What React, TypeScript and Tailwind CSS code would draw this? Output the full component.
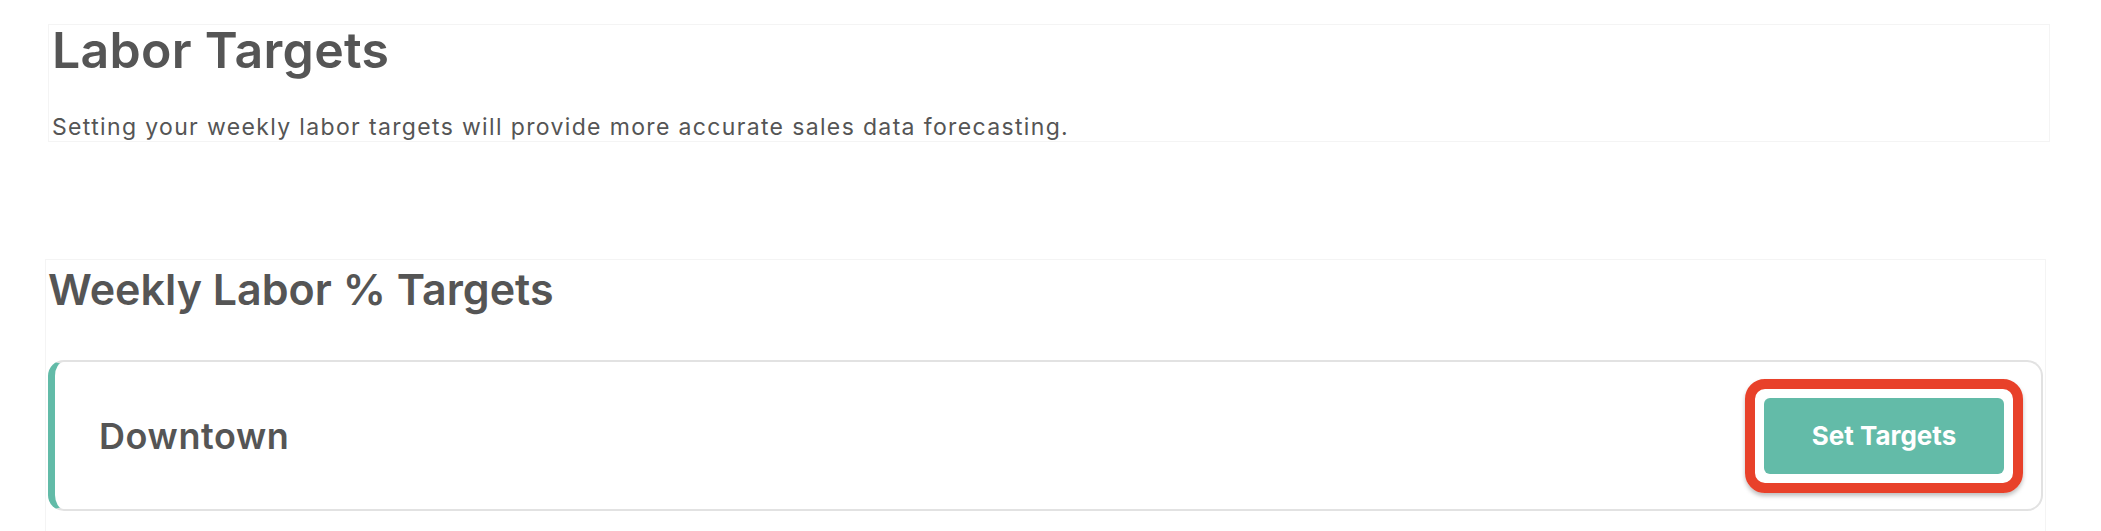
import React from "react";

type LocationRowProps = {
  name: string;
};

const LocationRow = ({ name }: LocationRowProps) => {
  return (
    <div className="flex items-center justify-between h-[151px] border-2 border-l-[7px] border-[#e2e2e2] border-l-[#62bba8] rounded-[16px] pl-[44px] pr-[18px]">
      <span className="text-[36px] font-semibold tracking-[0.6px] text-[#555555]">{name}</span>
      {/* red highlight ring around the action */}
      <div className="rounded-[20px] border-[10px] border-[#e8412a] p-[9px] shadow-[0_3px_4px_rgba(0,0,0,0.25)]">
        <button className="w-[240px] h-[76px] rounded-[6px] bg-[#63bba8] text-white text-[26px] font-bold">
          Set Targets
        </button>
      </div>
    </div>
  );
};

export default function App() {
  return (
    <div className="w-[2101px] h-[531px] bg-white overflow-hidden font-['Inter',sans-serif] text-[#555555]">
      <div className="ml-[48px] mr-[51px] mt-[24px] h-[118px] border border-[#f4f4f4] pl-[3px]">
        <h1 className="text-[50px] leading-[50px] font-semibold tracking-[0.3px]">Labor Targets</h1>
        <p className="mt-[38px] text-[23px] leading-[28px] tracking-[1.35px]">
          Setting your weekly labor targets will provide more accurate sales data forecasting.
        </p>
      </div>
      <div className="ml-[45px] mr-[55px] mt-[117px] h-[300px] border border-[#f4f4f4] px-[2px] pt-[7px]">
        <h2 className="text-[43px] leading-[44px] font-semibold">Weekly Labor % Targets</h2>
        <div className="mt-[49px]">
          <LocationRow name="Downtown" />
        </div>
      </div>
    </div>
  );
}
